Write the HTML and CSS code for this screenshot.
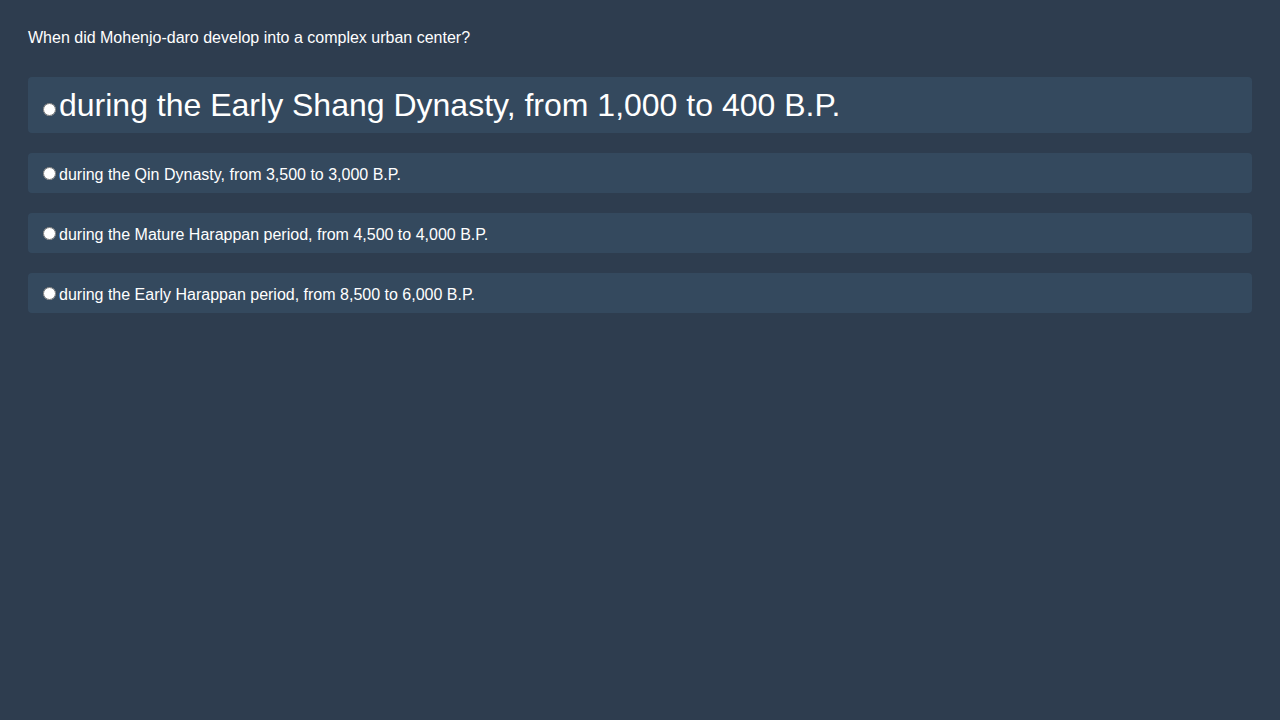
FILE: index.html
```html
<!DOCTYPE html>
<html>
<head>
<meta charset="utf-8">
<link rel="stylesheet" href="styles.css">
</head>
<body>
<div class="quiz">
  <div class="question">When did Mohenjo-daro develop into a complex urban center?</div>
  <div class="options">
    <label class="option big"><input type="radio" name="a">during the Early Shang Dynasty, from 1,000 to 400 B.P.</label>
    <label class="option"><input type="radio" name="a">during the Qin Dynasty, from 3,500 to 3,000 B.P.</label>
    <label class="option"><input type="radio" name="a">during the Mature Harappan period, from 4,500 to 4,000 B.P.</label>
    <label class="option"><input type="radio" name="a">during the Early Harappan period, from 8,500 to 6,000 B.P.</label>
  </div>
</div>
</body>
</html>
```
FILE: styles.css
```css
html, body {
  margin: 0;
  height: 100%;
  background: #2e3d4f;
}
body {
  font-family: "Liberation Sans", Arial, sans-serif;
  color: #ffffff;
}
.quiz {
  padding: 29px 28px 28px;
}
.question {
  font-size: 16px;
  line-height: 18px;
  margin-bottom: 30px;
}
.options {
  display: flex;
  flex-direction: column;
  gap: 20px;
}
.option {
  display: block;
  background: #34495e;
  border-radius: 4px;
  padding: 11px 10px 9px;
  font-size: 16px;
}
.option.big {
  font-size: 32px;
  line-height: 36px;
  padding: 10px;
}
.option input {
  margin: 3px 3px 0 5px;
}
```
